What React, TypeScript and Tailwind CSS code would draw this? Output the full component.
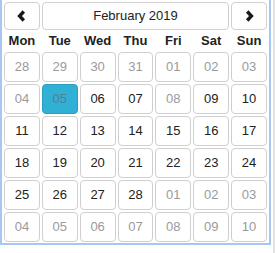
import React from 'react';

type Day = { label: string; muted?: boolean; selected?: boolean };

const weekDays = ['Mon', 'Tue', 'Wed', 'Thu', 'Fri', 'Sat', 'Sun'];

const d = (label: string, muted = false): Day => ({ label, muted });

const weeks: Day[][] = [
  [d('28', true), d('29', true), d('30', true), d('31', true), d('01', true), d('02', true), d('03', true)],
  [d('04', true), { label: '05', selected: true }, d('06'), d('07'), d('08', true), d('09'), d('10')],
  [d('11'), d('12'), d('13'), d('14'), d('15'), d('16'), d('17')],
  [d('18'), d('19'), d('20'), d('21'), d('22'), d('23'), d('24')],
  [d('25'), d('26'), d('27'), d('28'), d('01', true), d('02', true), d('03', true)],
  [d('04', true), d('05', true), d('06', true), d('07', true), d('08', true), d('09', true), d('10', true)],
];

function Chevron({ dir }: { dir: 'left' | 'right' }) {
  return (
    <svg width="9" height="12" viewBox="0 0 9 12" fill="none">
      <polyline
        points={dir === 'left' ? '6.8,1.5 2.6,6 6.8,10.5' : '2.2,1.5 6.4,6 2.2,10.5'}
        stroke="#1a1a1a"
        strokeWidth="3.4"
        strokeLinejoin="miter"
      />
    </svg>
  );
}

export default function App() {
  return (
    <div className="relative w-[277px] h-[253px] bg-white font-['Liberation_Sans',Arial,sans-serif] overflow-hidden">
      {/* calendar popup, top edge scrolled out of view */}
      <div className="w-[271px] border-x-2 border-b-2 border-[#a6c6f4] px-[2px] pt-[2px] pb-[1px]">
        {/* month switcher */}
        <div className="grid grid-cols-7 gap-[2px]">
          <button className="h-[28px] flex items-center justify-center rounded-[4px] border border-[#d0d0d0] bg-white">
            <Chevron dir="left" />
          </button>
          <button className="col-span-5 h-[28px] flex items-center justify-center rounded-[4px] border border-[#d0d0d0] bg-white text-[13px] text-[#222]">
            February 2019
          </button>
          <button className="h-[28px] flex items-center justify-center rounded-[4px] border border-[#d0d0d0] bg-white">
            <Chevron dir="right" />
          </button>
        </div>

        {/* weekday header */}
        <div className="grid grid-cols-7 gap-[2px] h-[22px]">
          {weekDays.map((w) => (
            <div key={w} className="flex items-center justify-center text-[13px] font-bold text-[#222]">
              {w}
            </div>
          ))}
        </div>

        {/* days */}
        <div className="grid grid-cols-7 gap-[2px]">
          {weeks.flat().map((day, i) => (
            <div
              key={i}
              className={`h-[30px] flex items-center justify-center rounded-[4px] border text-[13px] ${
                day.selected
                  ? 'bg-[#31b0d5] border-[#2a9fc3] text-[#4f7f95]'
                  : day.muted
                    ? 'bg-white border-[#cfcfcf] text-[#9a9a9a]'
                    : 'bg-white border-[#cfcfcf] text-[#222]'
              }`}
            >
              {day.label}
            </div>
          ))}
        </div>
      </div>

      {/* edge of the page behind */}
      <div className="absolute left-[273px] top-0 bottom-0 w-[2px] bg-[#e3e3e3]" />
    </div>
  );
}
